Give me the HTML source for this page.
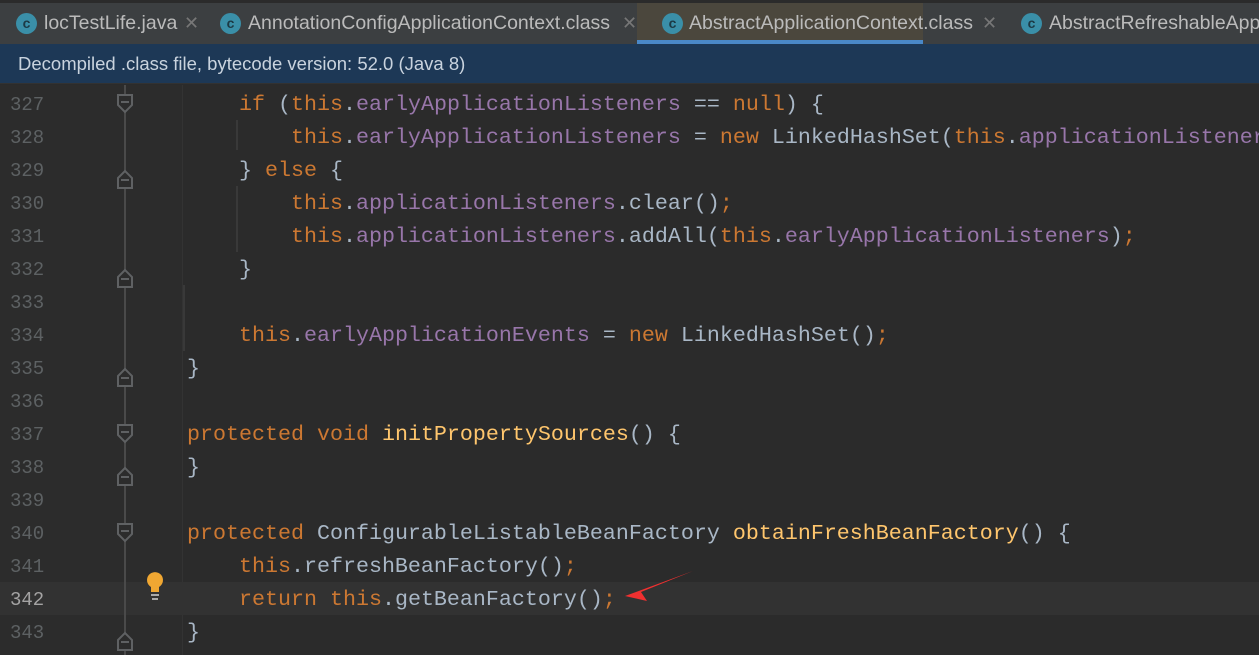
<!DOCTYPE html>
<html><head><meta charset="utf-8"><style>
*{margin:0;padding:0;box-sizing:border-box}
body{width:1259px;height:655px;overflow:hidden;background:#2b2b2b;position:relative;font-family:"Liberation Sans",sans-serif}
#tabs{position:absolute;left:0;top:0;width:1259px;height:44px;background:#3c3f41;border-top:3px solid #2b2b2b}
.tab{position:absolute;top:0;height:41px;color:#bbbbbb;font-size:19.5px;line-height:40px;white-space:nowrap}
.ic{position:absolute;top:10px;width:21px;height:21px;border-radius:50%;background:#3a8fa8;color:#1c3a45;font-size:14px;line-height:21px;text-align:center;font-weight:bold}
.x{color:#777;font-size:18px}
#banner{position:absolute;left:0;top:44px;width:1259px;height:40px;background:#1d3856;color:#c9d3de;font-size:18.5px;line-height:40px;padding-left:18px;border-bottom:1px solid #323232}
#gut{position:absolute;left:0;top:85px;width:183px;height:570px;background:#2c2c2c;border-right:1px solid #333}
.ln{position:absolute;left:10px;width:40px;font-family:"Liberation Mono",monospace;font-size:19px;color:#5d6163}
.code{position:absolute;left:187px;font-family:"Liberation Mono",monospace;font-size:21.67px;color:#a9b7c6;white-space:pre;line-height:33px}
.k{color:#cc7832}.f{color:#9876aa}.m{color:#ffc66d}
.g{position:absolute;width:2px;background:#393939}
</style></head><body>
<div id="tabs">
<div class="tab" style="left:0;width:207px;background:#3c3f41"><span class="ic" style="left:16px">c</span><span style="position:absolute;left:44px">locTestLife.java</span><span class="x" style="position:absolute;left:184px">✕</span></div>
<div class="tab" style="left:207px;width:430px"><span class="ic" style="left:13px">c</span><span style="position:absolute;left:41px">AnnotationConfigApplicationContext.class</span><span class="x" style="position:absolute;left:415px">✕</span></div>
<div class="tab" style="left:637px;width:286px;background:#4b473d;border-bottom:4px solid #4a88c7"><span class="ic" style="left:25px">c</span><span style="position:absolute;left:52px">AbstractApplicationContext.class</span><span class="x" style="position:absolute;left:345px">✕</span></div>
<div class="tab" style="left:923px;width:336px"><span class="ic" style="left:98px">c</span><span style="position:absolute;left:126px">AbstractRefreshableApp</span></div>
</div>
<div id="banner">Decompiled .class file, bytecode version: 52.0 (Java 8)</div>
<div id="gut"></div>
<div style="position:absolute;left:0;top:582px;width:1259px;height:33px;background:#323232"></div>
<div class="g" style="left:124px;top:85px;height:570px;background:#4a4a4a"></div>
<div class="g" style="left:236px;top:120px;height:30px"></div>
<div class="g" style="left:236px;top:186px;height:66px"></div>
<div class="g" style="left:183px;top:285px;height:66px"></div>
<div id="L"></div>
<svg style="position:absolute;left:0;top:0" width="1259" height="655">
<g fill="#2c2c2c" stroke="#5f6163" stroke-width="2">
<path d="M118 95h14v10l-7 7l-7-7z"/><path d="M118 178l7-7l7 7v10h-14z"/><path d="M118 277l7-7l7 7v10h-14z"/><path d="M118 376l7-7l7 7v10h-14z"/>
<path d="M118 425h14v10l-7 7l-7-7z"/><path d="M118 475l7-7l7 7v10h-14z"/><path d="M118 524h14v10l-7 7l-7-7z"/><path d="M118 640l7-7l7 7v10h-14z"/>
</g>
<g stroke="#5f6163" stroke-width="2"><path d="M121 102h8M121 180h8M121 279h8M121 378h8M121 432h8M121 477h8M121 531h8M121 642h8"/></g>
<path d="M151 587a8 8 0 1 1 8 0v5h-8z" fill="#f0a732"/><path d="M151 595h8M152 599h6" stroke="#aaa" stroke-width="2"/>
<path d="M625 596L693 571L641 592L647 601z" fill="#f03030"/>
</svg>
<script>
var lines=[
['327','    <span class="k">if</span> (<span class="k">this</span>.<span class="f">earlyApplicationListeners</span> == <span class="k">null</span>) {'],
['328','        <span class="k">this</span>.<span class="f">earlyApplicationListeners</span> = <span class="k">new</span> LinkedHashSet(<span class="k">this</span>.<span class="f">applicationListeners</span>);'],
['329','    } <span class="k">else</span> {'],
['330','        <span class="k">this</span>.<span class="f">applicationListeners</span>.clear()<span class="k">;</span>'],
['331','        <span class="k">this</span>.<span class="f">applicationListeners</span>.addAll(<span class="k">this</span>.<span class="f">earlyApplicationListeners</span>)<span class="k">;</span>'],
['332','    }'],['333',''],
['334','    <span class="k">this</span>.<span class="f">earlyApplicationEvents</span> = <span class="k">new</span> LinkedHashSet()<span class="k">;</span>'],
['335','}'],['336',''],
['337','<span class="k">protected void</span> <span class="m">initPropertySources</span>() {'],
['338','}'],['339',''],
['340','<span class="k">protected</span> ConfigurableListableBeanFactory <span class="m">obtainFreshBeanFactory</span>() {'],
['341','    <span class="k">this</span>.refreshBeanFactory()<span class="k">;</span>'],
['342','    <span class="k">return this</span>.getBeanFactory()<span class="k">;</span>'],
['343','}']];
var h='';lines.forEach(function(l,i){var y=88+33*i;
h+='<div class="ln" style="top:'+(y+6)+'px;'+(l[0]=='342'?'color:#a4a3a3':'')+'">'+l[0]+'</div><div class="code" style="top:'+y+'px">'+l[1]+'</div>';});
document.getElementById('L').innerHTML=h;
</script>
</body></html>
